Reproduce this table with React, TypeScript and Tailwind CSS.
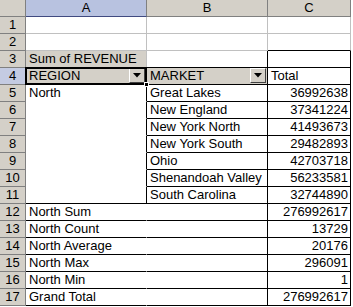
import * as React from 'react';

type Row = {
  n: number;
  a?: string;
  b?: string;
  c?: string;
  kind: 'blank' | 'field' | 'head' | 'item' | 'sub';
  last?: boolean;
};

const rows: Row[] = [
  { n: 1, kind: 'blank' },
  { n: 2, kind: 'blank' },
  { n: 3, a: 'Sum of REVENUE', kind: 'field' },
  { n: 4, a: 'REGION', b: 'MARKET', c: 'Total', kind: 'head' },
  { n: 5, a: 'North', b: 'Great Lakes', c: '36992638', kind: 'item' },
  { n: 6, b: 'New England', c: '37341224', kind: 'item' },
  { n: 7, b: 'New York North', c: '41493673', kind: 'item' },
  { n: 8, b: 'New York South', c: '29482893', kind: 'item' },
  { n: 9, b: 'Ohio', c: '42703718', kind: 'item' },
  { n: 10, b: 'Shenandoah Valley', c: '56233581', kind: 'item' },
  { n: 11, b: 'South Carolina', c: '32744890', kind: 'item', last: true },
  { n: 12, a: 'North Sum', c: '276992617', kind: 'sub' },
  { n: 13, a: 'North Count', c: '13729', kind: 'sub' },
  { n: 14, a: 'North Average', c: '20176', kind: 'sub' },
  { n: 15, a: 'North Max', c: '296091', kind: 'sub' },
  { n: 16, a: 'North Min', c: '1', kind: 'sub' },
  { n: 17, a: 'Grand Total', c: '276992617', kind: 'sub' },
];

const DropButton = () => (
  <span className="ml-auto mr-[1px] mb-[1px] flex h-[15px] w-[16px] items-center justify-center border border-t-white border-l-white border-r-[#404040] border-b-[#404040] bg-[#d4d0c8]">
    <svg width="8" height="5" viewBox="0 0 8 5">
      <path d="M0 0h8L4 4.5z" fill="#000" />
    </svg>
  </span>
);

const cellBase = 'flex h-[17px] items-end overflow-visible whitespace-nowrap border-r border-b leading-[16px]';

function cellsFor(r: Row) {
  switch (r.kind) {
    case 'blank':
      return [
        <div key="a" className={`${cellBase} border-[#c0c0c0] bg-white`} />,
        <div key="b" className={`${cellBase} border-[#c0c0c0] bg-white`} />,
        <div key="c" className={`${cellBase} border-r-[#c0c0c0] ${r.n === 2 ? 'border-b-black' : 'border-b-[#c0c0c0]'} bg-white`} />,
      ];
    case 'field':
      return [
        <div key="a" className={`${cellBase} border-r-[#c0c0c0] border-b-black bg-[#d4d0c8] pl-[3px]`}>{r.a}</div>,
        <div key="b" className={`${cellBase} border-r-black border-b-black bg-white`} />,
        <div key="c" className={`${cellBase} border-r-black border-b-black bg-white`} />,
      ];
    case 'head':
      return [
        <div key="a" className={`${cellBase} relative border-black bg-[#d4d0c8] pl-[3px]`}>
          <span>{r.a}</span>
          <DropButton />
          <span className="pointer-events-none absolute -left-[1px] -top-[1px] -right-[1px] -bottom-[1px] border-2 border-black" />
          <span className="absolute -right-[3px] -bottom-[3px] z-10 h-[5px] w-[5px] border border-white bg-black" />
        </div>,
        <div key="b" className={`${cellBase} border-black bg-[#d4d0c8] pl-[3px]`}>
          <span>{r.b}</span>
          <DropButton />
        </div>,
        <div key="c" className={`${cellBase} border-black bg-white pl-[3px]`}>{r.c}</div>,
      ];
    case 'item':
      return [
        <div key="a" className={`${cellBase} border-r-black ${r.last ? 'border-b-black' : 'border-b-white'} bg-white pl-[3px]`}>{r.a}</div>,
        <div key="b" className={`${cellBase} border-black bg-white pl-[3px]`}>{r.b}</div>,
        <div key="c" className={`${cellBase} justify-end border-black bg-white pr-[2px]`}>{r.c}</div>,
      ];
    case 'sub':
    default:
      return [
        <div key="a" className={`${cellBase} border-r-white border-b-black bg-white pl-[3px]`}>{r.a}</div>,
        <div key="b" className={`${cellBase} border-black bg-white`} />,
        <div key="c" className={`${cellBase} justify-end border-black bg-white pr-[2px]`}>{r.c}</div>,
      ];
  }
}

const App: React.FC = () => {
  return (
    <div className="h-[307px] w-[353px] bg-white font-['Liberation_Sans',Arial,sans-serif] text-[13px] text-black">
      <div className="grid w-[351px] grid-cols-[26px_121px_121px_83px]">
        <div className="h-[17px] border-r border-b border-[#808080] bg-[#d4d0c8]" />
        <div className="flex h-[17px] items-center justify-center border-r border-b border-r-[#808080] border-b-[#404a80] bg-[#b8c2e0] leading-[16px]">
          A
        </div>
        <div className="flex h-[17px] items-center justify-center border-r border-b border-[#808080] bg-[#d4d0c8] leading-[16px]">
          B
        </div>
        <div className="flex h-[17px] items-center justify-center border-r border-b border-[#808080] bg-[#d4d0c8] leading-[16px]">
          C
        </div>

        {rows.map((r) => (
          <React.Fragment key={r.n}>
            <div
              className={`flex h-[17px] items-end justify-center border-r border-b border-[#808080] leading-[16px] ${
                r.n === 4 ? 'bg-[#c4cbe2]' : 'bg-[#d4d0c8]'
              }`}
            >
              {r.n}
            </div>
            {cellsFor(r)}
          </React.Fragment>
        ))}
      </div>
    </div>
  );
};

export default App;
